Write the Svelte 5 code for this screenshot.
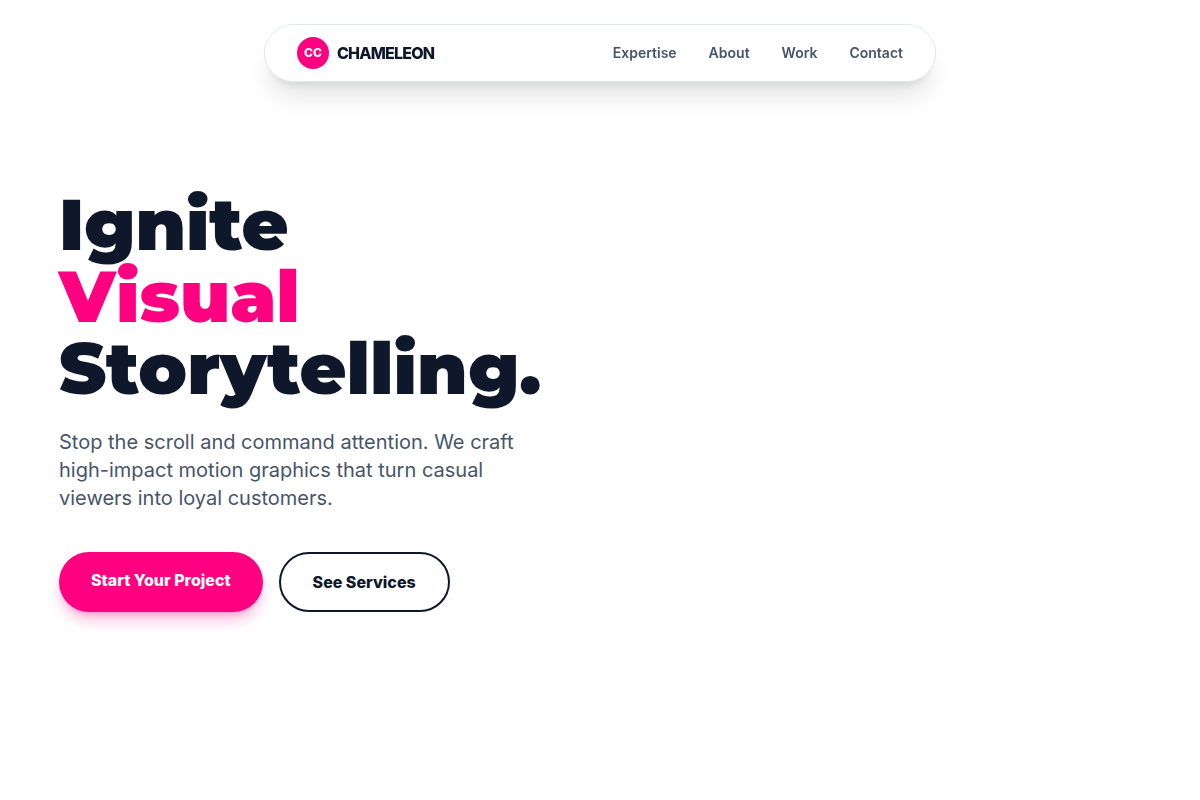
<script>
  const links = [
    { label: 'Expertise', href: '#expertise' },
    { label: 'About', href: '#about' },
    { label: 'Work', href: '#work' },
    { label: 'Contact', href: '#contact' }
  ]
</script>

<header class="header">
  <nav class="nav" aria-label="Main">
    <a class="brand" href="#top">
      <span class="brand-mark">CC</span>
      <span class="brand-name">CHAMELEON</span>
    </a>
    <div class="nav-links">
      {#each links as link}
        <a class="nav-link" href={link.href}>{link.label}</a>
      {/each}
    </div>
  </nav>
</header>

<main class="hero" id="top">
  <div class="hero-copy">
    <h1 class="hero-title">Ignite<br /><span class="accent">Visual</span><br />Storytelling.</h1>
    <p class="hero-text">Stop the scroll and command attention. We craft high-impact motion graphics that turn casual viewers into loyal customers.</p>
    <div class="hero-actions">
      <a class="btn btn-primary" href="#contact">Start Your Project</a>
      <a class="btn btn-outline" href="#expertise">See Services</a>
    </div>
  </div>
</main>

<style>
  :global(body) { margin: 0; background: #fff; color: #0f172a; font-family: Inter, "Liberation Sans", sans-serif; }
  a { color: inherit; text-decoration: none; }

  .header { position: fixed; top: 24px; left: 0; right: 0; z-index: 10; padding: 0 24px; }
  .nav { display: flex; align-items: center; justify-content: space-between; box-sizing: border-box; max-width: 672px; margin: 0 auto; padding: 12px 32px; background: #fff; border: 1px solid #e2e8f0; border-radius: 999px; box-shadow: 0 20px 25px -5px rgba(0, 0, 0, 0.1), 0 8px 10px -6px rgba(0, 0, 0, 0.1); }
  .brand { display: flex; align-items: center; gap: 8px; }
  .brand-mark { display: flex; align-items: center; justify-content: center; width: 32px; height: 32px; border-radius: 50%; background: #ff0080; color: #fff; font-size: 12px; line-height: 16px; font-weight: 800; }
  .brand-name { font-size: 16px; line-height: 24px; font-weight: 800; letter-spacing: -0.05em; }
  .nav-links { display: flex; gap: 32px; }
  .nav-link { color: #475569; font-size: 14px; line-height: 20px; font-weight: 600; }
  .nav-link:hover { color: #ff0080; }

  .hero { display: flex; align-items: center; box-sizing: border-box; min-height: 100vh; padding: 120px 59px; }
  .hero-copy { max-width: 512px; }
  .hero-title { margin: 0 0 24px; font-family: Montserrat, Inter, sans-serif; font-size: 72px; line-height: 72px; font-weight: 900; }
  .accent { color: #ff0080; }
  .hero-text { max-width: 480px; margin: 0 0 40px; color: #475569; font-size: 20px; line-height: 28px; }
  .hero-actions { display: flex; flex-wrap: wrap; gap: 16px; }
  .btn { padding: 16px 32px; border-radius: 999px; font-size: 16px; line-height: 24px; font-weight: 800; }
  .btn-primary { background: #ff0080; color: #fff; box-shadow: 0 10px 15px -3px rgba(255, 0, 128, 0.3), 0 4px 6px -4px rgba(255, 0, 128, 0.3); }
  .btn-outline { border: 2px solid #0f172a; }
  .btn-outline:hover { background: #0f172a; color: #fff; }
</style>
